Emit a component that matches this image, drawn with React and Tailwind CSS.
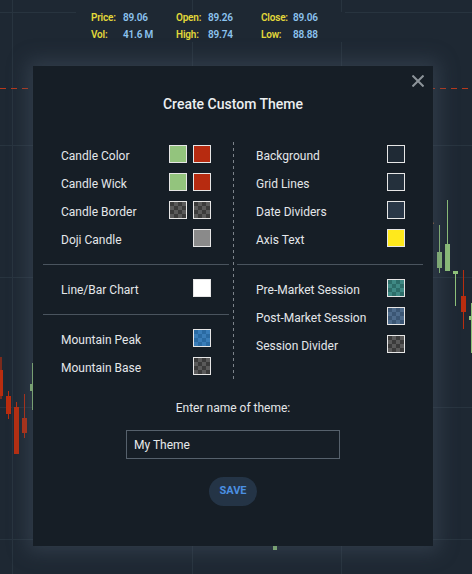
import React from "react";

const checker = {
  gray: "bg-[conic-gradient(#5a5a5a_25%,#3b3b3b_0_50%,#5a5a5a_0_75%,#3b3b3b_0)]",
};

function Swatch({ cls }) {
  return <div className={`w-[18px] h-[18px] border border-[#e6e6e6] bg-size-[8px_8px] ${cls}`} />;
}

function Row({ label, children, right }) {
  return (
    <div className={`h-[28px] flex items-center justify-between ${right ? "pl-[19px]" : "pl-[18px]"} pr-[18px]`}>
      <span className="text-[12px] leading-[16px] text-[#e4e7ea] pt-[3px]">{label}</span>
      <div className="flex gap-[6px]">{children}</div>
    </div>
  );
}

const GRAY = "bg-[conic-gradient(#5a5a5a_25%,#3b3b3b_0_50%,#5a5a5a_0_75%,#3b3b3b_0)]";
const BLUE = "bg-[conic-gradient(#3a7db8_25%,#2a6aa2_0_50%,#3a7db8_0_75%,#2a6aa2_0)]";
const TEAL = "bg-[conic-gradient(#3f8984_25%,#2d6d69_0_50%,#3f8984_0_75%,#2d6d69_0)]";
const SLATE = "bg-[conic-gradient(#4e6b8b_25%,#3b5674_0_50%,#4e6b8b_0_75%,#3b5674_0)]";

function Chart() {
  const grid = "#28343f";
  const red = "#b92d0f";
  const green = "#8fc27a";
  return (
    <svg className="absolute inset-0" width="472" height="574" viewBox="0 0 472 574">
      {/* horizontal grid */}
      <line x1="0" y1="12.5" x2="76" y2="12.5" stroke={grid} />
      <line x1="345" y1="12.5" x2="472" y2="12.5" stroke={grid} />
      {[145, 277, 407, 539].map((y) => (
        <line key={y} x1="0" y1={y + 0.5} x2="472" y2={y + 0.5} stroke={grid} />
      ))}
      {/* vertical grid */}
      <line x1="12.5" y1="0" x2="12.5" y2="574" stroke={grid} />
      <line x1="192.5" y1="0" x2="192.5" y2="12" stroke={grid} />
      <line x1="192.5" y1="42" x2="192.5" y2="574" stroke={grid} />
      <line x1="341.5" y1="0" x2="341.5" y2="12" stroke={grid} />
      <line x1="341.5" y1="42" x2="341.5" y2="574" stroke={grid} />
      {/* red dashed price line */}
      <line x1="0" y1="88.5" x2="472" y2="88.5" stroke="#b8391c" strokeDasharray="6 5" />
      {/* left candles */}
      <line x1="1" y1="357" x2="1" y2="399" stroke={red} strokeWidth="1.2" />
      <rect x="0" y="370" width="3" height="26" fill={red} />
      <line x1="8.5" y1="391" x2="8.5" y2="419" stroke={red} />
      <rect x="6" y="396" width="5" height="18" fill={red} />
      <line x1="16.5" y1="402" x2="16.5" y2="454" stroke={red} />
      <rect x="14" y="407" width="5" height="47" fill={red} />
      <line x1="24.5" y1="394" x2="24.5" y2="438" stroke={red} />
      <rect x="22" y="418" width="5" height="15" fill={red} />
      <line x1="32.5" y1="363" x2="32.5" y2="410" stroke={green} />
      <rect x="30" y="384" width="5" height="7" fill={green} />
      {/* right candles */}
      <line x1="439.5" y1="225" x2="439.5" y2="273" stroke={green} />
      <rect x="437" y="252" width="5" height="16" fill={green} />
      <line x1="447.5" y1="200" x2="447.5" y2="271" stroke={green} />
      <rect x="445" y="244" width="5" height="27" fill={green} />
      <line x1="455.5" y1="271" x2="455.5" y2="306" stroke={green} />
      <rect x="453" y="271" width="5" height="3" fill={green} />
      <line x1="463.5" y1="270" x2="463.5" y2="329" stroke={red} />
      <rect x="461" y="296" width="5" height="16" fill={red} />
      <rect x="471" y="303" width="1" height="50" fill={green} />
      <rect x="469" y="316" width="3" height="4" fill={green} />
      <rect x="273" y="530" width="4" height="20" fill={green} />
      <rect x="432.5" y="222.5" width="1.5" height="1.5" fill="#8a5a3a" />
    </svg>
  );
}

function Info() {
  const L = "text-[#e2d83a]";
  const V = "text-[#8cc3ef]";
  return (
    <div className="absolute left-[91px] top-[9px] grid grid-cols-[32px_53px_32px_53px_32px_auto] text-[10px] leading-[17px] font-semibold tracking-[-0.2px]">
      <span className={L}>Price:</span>
      <span className={V}>89.06</span>
      <span className={L}>Open:</span>
      <span className={V}>89.26</span>
      <span className={L}>Close:</span>
      <span className={V}>89.06</span>
      <span className={L}>Vol:</span>
      <span className={V}>41.6 M</span>
      <span className={L}>High:</span>
      <span className={V}>89.74</span>
      <span className={L}>Low:</span>
      <span className={V}>88.88</span>
    </div>
  );
}

export default function App() {
  return (
    <div className="relative w-[472px] h-[574px] overflow-hidden bg-[#1e2833] font-['Roboto',sans-serif]">
      <Chart />
      <Info />
      <div className="absolute left-[33px] top-[66px] w-[400px] h-[480px] bg-[#161e26] shadow-[0_0_18px_6px_rgba(70,85,100,0.45)] flex flex-col">
        <button className="absolute left-[379px] top-[9px] w-[12px] h-[12px]" aria-label="close">
          <svg width="12" height="12" viewBox="0 0 12 12">
            <path d="M1.2 1.2 L10.8 10.8 M10.8 1.2 L1.2 10.8" stroke="#8d949a" strokeWidth="2" strokeLinecap="square" />
          </svg>
        </button>
        <div className="pt-[28px] text-center text-[14px] leading-[20px] font-medium text-[#eceff1]">
          Create Custom Theme
        </div>
        <div className="mt-[26px] flex px-[10px]">
          <div className="w-[186px] flex flex-col">
            <div className="pb-[12px]">
              <Row label="Candle Color">
                <Swatch cls="bg-[#93c47d]" />
                <Swatch cls="bg-[#b72b10]" />
              </Row>
              <Row label="Candle Wick">
                <Swatch cls="bg-[#93c47d]" />
                <Swatch cls="bg-[#b72b10]" />
              </Row>
              <Row label="Candle Border">
                <Swatch cls={GRAY} />
                <Swatch cls={GRAY} />
              </Row>
              <Row label="Doji Candle">
                <Swatch cls="bg-[#8a8a8a]" />
              </Row>
            </div>
            <div className="h-px bg-[#4a545e]" />
            <div className="pt-[9px] pb-[12px]">
              <Row label="Line/Bar Chart">
                <Swatch cls="bg-white" />
              </Row>
            </div>
            <div className="h-px bg-[#4a545e]" />
            <div className="pt-[9px]">
              <Row label="Mountain Peak">
                <Swatch cls={BLUE} />
              </Row>
              <Row label="Mountain Base">
                <Swatch cls={GRAY} />
              </Row>
            </div>
          </div>
          <div className="w-[8px] flex justify-center pt-[2px]">
            <div className="w-px h-[240px] bg-[repeating-linear-gradient(to_bottom,#7c838a_0_3px,transparent_3px_6px)]" />
          </div>
          <div className="w-[186px] flex flex-col">
            <div className="pb-[12px]">
              <Row right label="Background">
                <Swatch cls="bg-[#1f2a35]" />
              </Row>
              <Row right label="Grid Lines">
                <Swatch cls="bg-[#24303c]" />
              </Row>
              <Row right label="Date Dividers">
                <Swatch cls="bg-[#293747]" />
              </Row>
              <Row right label="Axis Text">
                <Swatch cls="bg-[#ffe91c]" />
              </Row>
            </div>
            <div className="h-px bg-[#4a545e]" />
            <div className="pt-[9px]">
              <Row right label="Pre-Market Session">
                <Swatch cls={TEAL} />
              </Row>
              <Row right label="Post-Market Session">
                <Swatch cls={SLATE} />
              </Row>
              <Row right label="Session Divider">
                <Swatch cls={GRAY} />
              </Row>
            </div>
          </div>
        </div>
        <div className="mt-[18px] text-center text-[12px] leading-[16px] text-[#e3e6e8]">
          Enter name of theme:
        </div>
        <input
          readOnly
          value="My Theme"
          className="mt-[14px] self-center w-[214px] h-[29px] border border-[#56616c] bg-transparent px-[7px] text-[12px] text-[#e8eaec] outline-none font-['Roboto',sans-serif]"
        />
        <button className="mt-[18px] self-center w-[48px] h-[29px] rounded-full bg-[#243446] text-[#4b8fe2] text-[11px] font-bold">
          SAVE
        </button>
      </div>
    </div>
  );
}
